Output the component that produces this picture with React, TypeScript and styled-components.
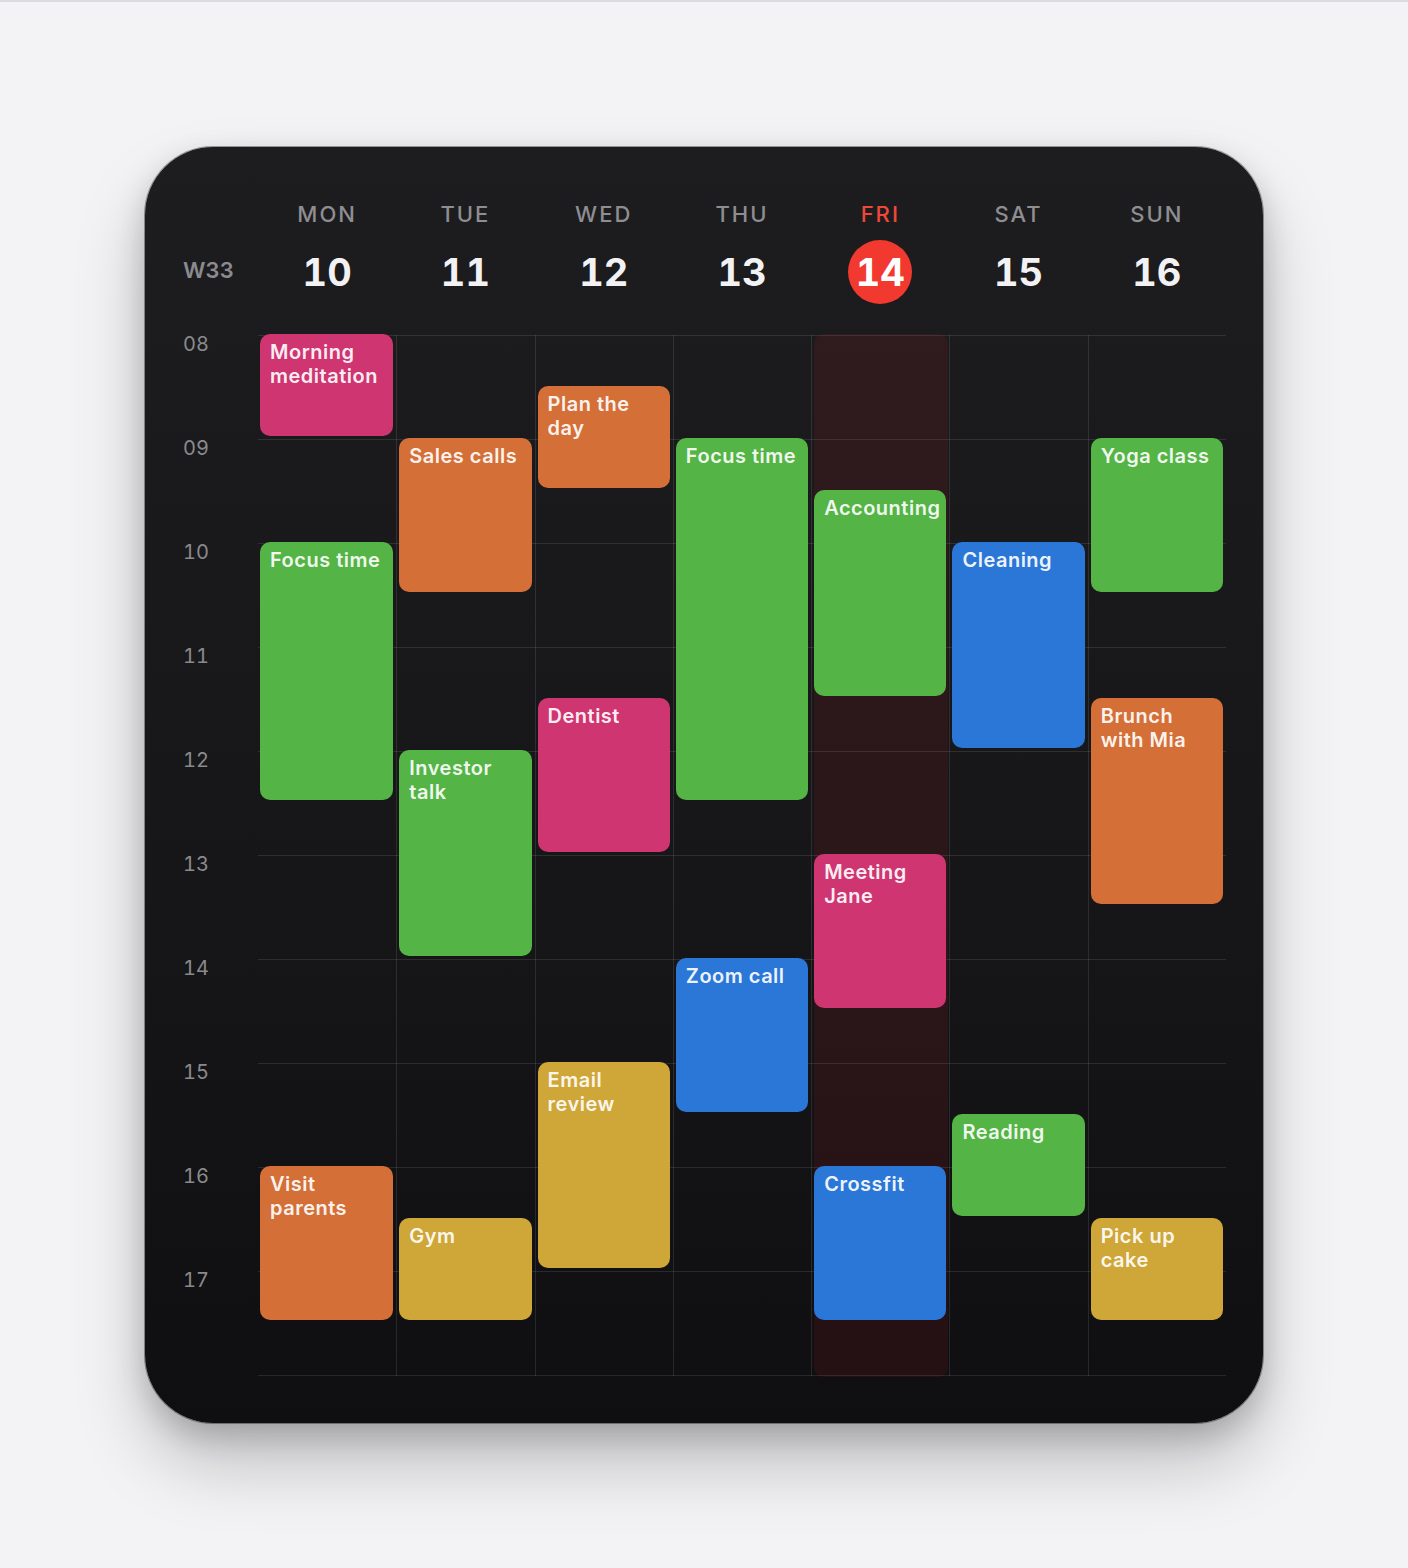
import React from "react";
import styled, { createGlobalStyle, css } from "styled-components";

const HOUR = 104;
const FIRST_HOUR = 8;
const HOURS = 10;

const GlobalStyle = createGlobalStyle`
  html, body { margin: 0; padding: 0; }
  body {
    background: #f3f3f5;
    border-top: 2px solid #dcdce0;
    font-family: Inter, "Noto Sans", "Liberation Sans", sans-serif;
    -webkit-font-smoothing: antialiased;
  }
`;

const Page = styled.div`
  display: flex;
  justify-content: center;
  padding: 145px 0 143px;
`;

const Card = styled.div`
  width: 1118px;
  box-sizing: border-box;
  padding: 52px 37px 47px 0;
  border-radius: 68px;
  background: linear-gradient(to bottom, #1d1d1f 0%, #161618 60%, #0f0f11 100%);
  box-shadow: 0 0 0 1px rgba(0, 0, 0, 0.35), 0 40px 70px rgba(0, 0, 0, 0.22),
    0 12px 30px rgba(0, 0, 0, 0.18);
`;

const Header = styled.div`
  display: flex;
  margin-bottom: 31px;
`;

const Gutter = styled.div`
  width: 113px;
  flex: none;
  box-sizing: border-box;
  padding-left: 38px;
`;

const HeaderGutter = styled(Gutter)`
  padding-top: 41px;
`;

const WeekLabel = styled.div`
  height: 64px;
  line-height: 64px;
  font-size: 22px;
  font-weight: 600;
  color: #8b8b8f;
  margin-top: -2px;
  font-variant-numeric: tabular-nums;
`;

const DayHead = styled.div`
  flex: 1;
  display: flex;
  flex-direction: column;
  align-items: center;
  gap: 11px;
`;

const DayName = styled.div<{ $today?: boolean }>`
  height: 30px;
  line-height: 30px;
  font-size: 22px;
  font-weight: 500;
  letter-spacing: 2px;
  color: ${(p) => (p.$today ? "#f2463b" : "#8e8e92")};
`;

const DayNumber = styled.div<{ $today?: boolean }>`
  width: 64px;
  height: 64px;
  border-radius: 50%;
  display: flex;
  align-items: center;
  justify-content: center;
  font-size: 38px;
  font-weight: 700;
  color: #f2f2f4;
  font-variant-numeric: tabular-nums;
  ${(p) =>
    p.$today &&
    css`
      background: #f2392f;
      color: #ffffff;
    `}
`;

const Body = styled.div`
  display: flex;
`;

const HourColumn = styled(Gutter)`
  display: grid;
  grid-template-rows: repeat(${HOURS}, ${HOUR}px);
`;

const HourLabel = styled.div`
  font-size: 20px;
  line-height: 20px;
  font-weight: 400;
  color: #8a8a8e;
  margin-top: -1px;
  font-variant-numeric: tabular-nums;
`;

const DaysGrid = styled.div`
  flex: 1;
  height: ${HOURS * HOUR + 1}px;
  display: grid;
  grid-template-columns: repeat(7, 1fr);
  background: repeating-linear-gradient(
    to bottom,
    rgba(255, 255, 255, 0.1) 0px,
    rgba(255, 255, 255, 0.1) 1px,
    transparent 1px,
    transparent ${HOUR}px
  );
`;

const DayColumn = styled.div<{ $first?: boolean; $today?: boolean }>`
  position: relative;
  display: grid;
  grid-template-rows: repeat(${HOURS * 2}, ${HOUR / 2}px);
  grid-template-columns: minmax(0, 1fr);
  border-left: ${(p) => (p.$first ? "none" : "1px solid rgba(255, 255, 255, 0.1)")};
  ${(p) =>
    p.$today &&
    css`
      &::before {
        content: "";
        position: absolute;
        top: -1px;
        bottom: -1px;
        left: 2px;
        right: 1px;
        border-radius: 10px;
        background: rgba(255, 38, 38, 0.09);
        pointer-events: none;
      }
    `}
`;

const COLORS = {
  pink: "#cf3571",
  orange: "#d46f38",
  green: "#55b446",
  blue: "#2b77d7",
  yellow: "#cfa638",
} as const;

type ColorKey = keyof typeof COLORS;

const EventCard = styled.div<{ $color: ColorKey }>`
  position: relative;
  z-index: 1;
  margin: -1px 3px 3px 2px;
  border-radius: 10px;
  background: ${(p) => COLORS[p.$color]};
  padding: 6px 8px 0 10px;
  font-size: 20px;
  line-height: 24px;
  font-weight: 600;
  letter-spacing: 0.5px;
  color: rgba(255, 255, 255, 0.93);
  overflow: hidden;
`;

type Ev = { start: number; end: number; title: string; color: ColorKey };

const days: { name: string; num: number; today?: boolean; events: Ev[] }[] = [
  {
    name: "MON",
    num: 10,
    events: [
      { start: 8, end: 9, title: "Morning meditation", color: "pink" },
      { start: 10, end: 12.5, title: "Focus time", color: "green" },
      { start: 16, end: 17.5, title: "Visit parents", color: "orange" },
    ],
  },
  {
    name: "TUE",
    num: 11,
    events: [
      { start: 9, end: 10.5, title: "Sales calls", color: "orange" },
      { start: 12, end: 14, title: "Investor talk", color: "green" },
      { start: 16.5, end: 17.5, title: "Gym", color: "yellow" },
    ],
  },
  {
    name: "WED",
    num: 12,
    events: [
      { start: 8.5, end: 9.5, title: "Plan the day", color: "orange" },
      { start: 11.5, end: 13, title: "Dentist", color: "pink" },
      { start: 15, end: 17, title: "Email review", color: "yellow" },
    ],
  },
  {
    name: "THU",
    num: 13,
    events: [
      { start: 9, end: 12.5, title: "Focus time", color: "green" },
      { start: 14, end: 15.5, title: "Zoom call", color: "blue" },
    ],
  },
  {
    name: "FRI",
    num: 14,
    today: true,
    events: [
      { start: 9.5, end: 11.5, title: "Accounting", color: "green" },
      { start: 13, end: 14.5, title: "Meeting Jane", color: "pink" },
      { start: 16, end: 17.5, title: "Crossfit", color: "blue" },
    ],
  },
  {
    name: "SAT",
    num: 15,
    events: [
      { start: 10, end: 12, title: "Cleaning", color: "blue" },
      { start: 15.5, end: 16.5, title: "Reading", color: "green" },
    ],
  },
  {
    name: "SUN",
    num: 16,
    events: [
      { start: 9, end: 10.5, title: "Yoga class", color: "green" },
      { start: 11.5, end: 13.5, title: "Brunch with Mia", color: "orange" },
      { start: 16.5, end: 17.5, title: "Pick up cake", color: "yellow" },
    ],
  },
];

const rowOf = (t: number) => (t - FIRST_HOUR) * 2 + 1;

export default function App() {
  const hours = Array.from({ length: HOURS }, (_, i) =>
    String(FIRST_HOUR + i).padStart(2, "0")
  );
  return (
    <>
      <GlobalStyle />
      <Page>
        <Card>
          <Header>
            <HeaderGutter>
              <WeekLabel>W33</WeekLabel>
            </HeaderGutter>
            {days.map((d) => (
              <DayHead key={d.name}>
                <DayName $today={d.today}>{d.name}</DayName>
                <DayNumber $today={d.today}>{d.num}</DayNumber>
              </DayHead>
            ))}
          </Header>
          <Body>
            <HourColumn>
              {hours.map((h) => (
                <HourLabel key={h}>{h}</HourLabel>
              ))}
            </HourColumn>
            <DaysGrid>
              {days.map((d, i) => (
                <DayColumn key={d.name} $first={i === 0} $today={d.today}>
                  {d.events.map((e) => (
                    <EventCard
                      key={e.title}
                      $color={e.color}
                      style={{ gridRow: `${rowOf(e.start)} / ${rowOf(e.end)}` }}
                    >
                      {e.title}
                    </EventCard>
                  ))}
                </DayColumn>
              ))}
            </DaysGrid>
          </Body>
        </Card>
      </Page>
    </>
  );
}
